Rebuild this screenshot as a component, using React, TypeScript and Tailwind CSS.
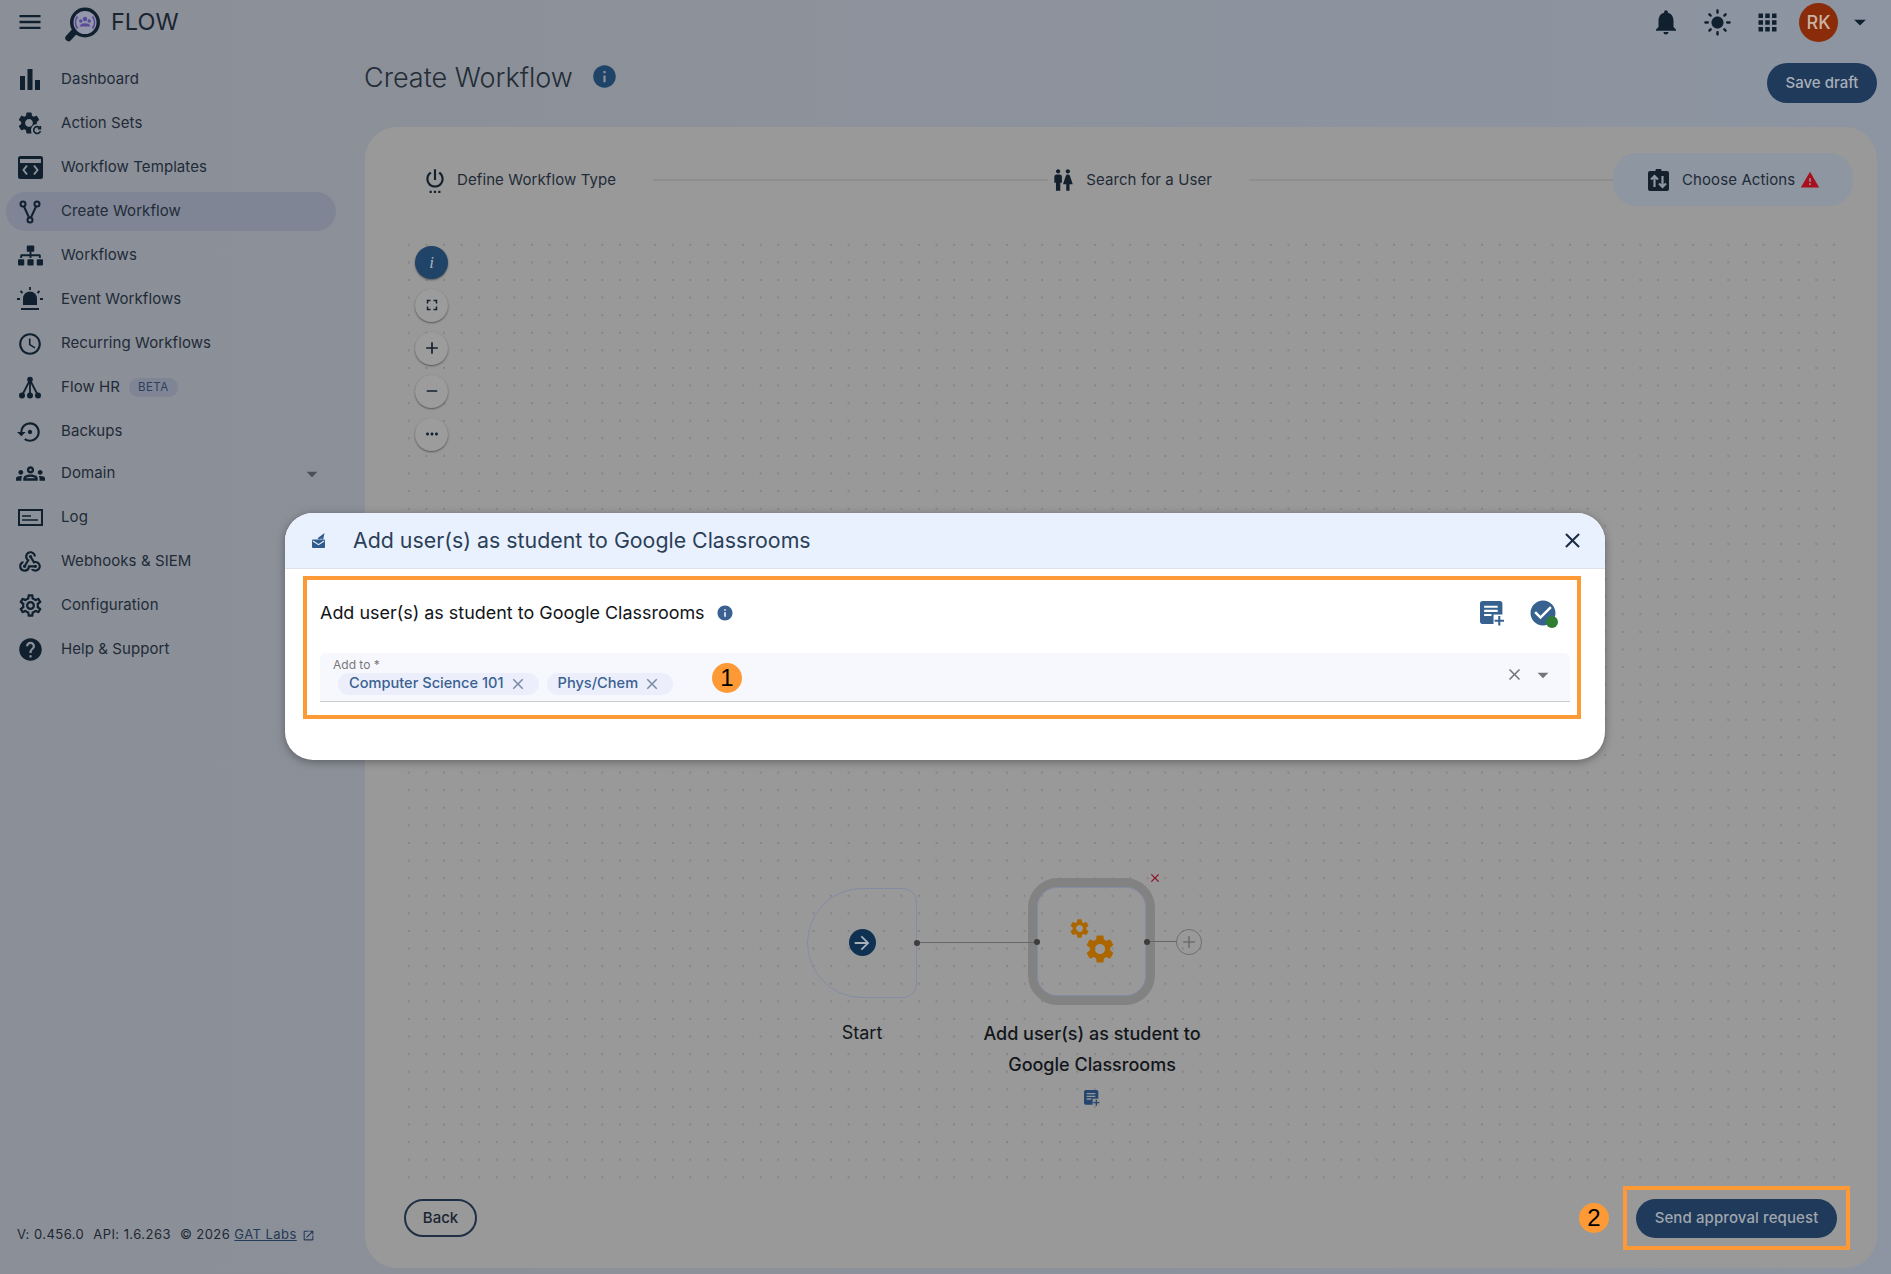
import React from "react";
import {
  MdAccessTime, MdAdd, MdApps, MdArrowDropDown, MdArrowForward, MdCheckCircle, MdClose, MdFullscreen,
  MdHelp, MdInfo, MdLightMode, MdMenu, MdMoreHoriz, MdNotifications, MdOpenInNew, MdOutlineGroups,
  MdOutlineSettings, MdOutlineSettingsBackupRestore, MdOutlineWebhook, MdRemove, MdSettings,
  MdSettingsPower, MdWarning, MdWc,
} from "react-icons/md";
import { FaSitemap } from "react-icons/fa";

const Bars = () => (
  <svg width="22" height="24" viewBox="0 0 22 24" fill="currentColor">
    <rect x="1" y="8" width="5" height="14" /><rect x="8.5" y="1" width="5" height="21" /><rect x="16" y="12" width="5" height="10" />
  </svg>
);
const ActionSets = () => (
  <span className="relative block w-6 h-6">
    <MdSettings size={26} className="absolute -left-[2px] -top-[2px]" />
    <span className="absolute -right-[1px] bottom-0 w-3 h-3 rounded-full bg-[#8b8f97] flex items-center justify-center">
      <svg width="10" height="10" viewBox="0 0 10 10" fill="none" stroke="currentColor" strokeWidth="1.6"><path d="M8 3.2A3.4 3.4 0 1 0 8.4 6" /><path d="M8.4 1v2.6H5.8" /></svg>
    </span>
  </span>
);
const Template = () => (
  <svg width="25" height="23" viewBox="0 0 25 23" fill="currentColor">
    <path fillRule="evenodd" d="M2.5 0h20A2.5 2.5 0 0 1 25 2.5v18a2.5 2.5 0 0 1-2.500 2.500h-20A2.500 2.500 0 0 1 0 20.500v-18A2.500 2.500 0 0 1 2.500 0zM2 5v16h21V5z" />
    <rect x="2" y="7" width="21" height="14" />
    <path d="M9 9.500 5.500 14 9 18.500M16 9.500 19.500 14 16 18.500" fill="none" stroke="#8b8f97" strokeWidth="2" />
    <rect x="2" y="3" width="21" height="2" fill="#8b8f97" />
  </svg>
);
const Fork = () => (
  <svg width="22" height="24" viewBox="0 0 22 24" fill="none" stroke="currentColor" strokeWidth="2">
    <circle cx="4" cy="4" r="2.500" /><circle cx="18" cy="4" r="2.500" /><circle cx="11" cy="20" r="2.500" />
    <path d="M5 6.500 10 17.500M17 6.500 12 17.500" />
  </svg>
);
const Siren = () => (
  <svg width="26" height="26" viewBox="0 0 26 26" fill="currentColor">
    <path d="M6 18v-6.500a7 7 0 0 1 14 0V18z" /><rect x="4" y="21" width="18" height="2" />
    <path d="M13 0v3M3.500 4 5.500 6M22.500 4 20.500 6M0 12h3M23 12h3" stroke="currentColor" strokeWidth="1.800" />
  </svg>
);
const FlowHr = () => (
  <svg width="24" height="24" viewBox="0 0 24 24" fill="currentColor">
    <circle cx="12" cy="3.500" r="2.800" /><circle cx="4" cy="19.500" r="3" /><circle cx="12" cy="19.500" r="3" /><circle cx="20" cy="19.500" r="3" />
    <path d="M12 4 4 19.500M12 4v15M12 4l8 15.500" stroke="currentColor" strokeWidth="1.800" fill="none" />
  </svg>
);
const LogIcon = () => (
  <svg width="25" height="17" viewBox="0 0 25 17" fill="none">
    <rect x="1" y="1" width="23" height="15" stroke="currentColor" strokeWidth="2" />
    <path d="M4 7h9M4 11h16" stroke="currentColor" strokeWidth="1.700" />
  </svg>
);
const NoteAdd = ({ size, bg }: { size: number; bg: string }) => (
  <svg width={size} height={size} viewBox="0 0 24 24" className="block">
    <path d="M2.500 0h16.500A2.500 2.500 0 0 1 21.500 2.500V22H2.500A2.500 2.500 0 0 1 0 19.500v-17A2.500 2.500 0 0 1 2.500 0z" fill="currentColor" />
    <path d="M4 5.500h13M4 9.500h13M4 13.500h7" stroke={bg} strokeWidth="2" />
    <rect x="13" y="13" width="11" height="11" fill={bg} />
    <path d="M18.500 14.500v9M14 19h9" stroke="currentColor" strokeWidth="2" />
  </svg>
);
const ClipSwap = () => (
  <svg width="21" height="22" viewBox="0 0 21 22" fill="currentColor">
    <path d="M2 2h5.500a3 3 0 0 1 6 0H19a2 2 0 0 1 2 2v16a2 2 0 0 1-2 2H2a2 2 0 0 1-2-2V4a2 2 0 0 1 2-2z" />
    <path d="M6.500 18V7M3 10.500 6.500 7 10 10.500M14.500 7v11M11 14.500 14.500 18 18 14.500" fill="none" stroke="#8e96a1" strokeWidth="2.200" />
  </svg>
);
const MailRocket = () => (
  <svg width="13" height="15" viewBox="0 0 14 16" fill="#2f5b8d">
    <rect x="0" y="7" width="14" height="9" rx="1" />
    <path d="M1 8.500 7 12.500l6-4" stroke="#eaf1fe" strokeWidth="1.200" fill="none" />
    <path d="M6 5.500 13.500 0 12 7 9.800 5.800 8 7z" />
  </svg>
);
const Logo = () => (
  <svg width="37" height="36" viewBox="0 0 37 36" className="block">
    <path d="M12 23 4.500 31" stroke="#10202f" strokeWidth="6.500" strokeLinecap="round" />
    <circle cx="21" cy="15.500" r="15" fill="#10202f" />
    <circle cx="21" cy="15.500" r="11.500" fill="#9496aa" />
    <path d="M13.500 9.500a10 10 0 0 0 0 12M28.500 9.500a10 10 0 0 1 0 12" stroke="#5a4a9c" strokeWidth="1.700" fill="none" />
    <circle cx="21" cy="12" r="2.200" fill="#5a4a9c" /><circle cx="16.800" cy="14" r="1.700" fill="#5a4a9c" /><circle cx="25.200" cy="14" r="1.700" fill="#5a4a9c" />
    <path d="M15.500 19.500c.5-4.500 10.500-4.500 11 0z" fill="#5a4a9c" />
  </svg>
);

const nav: { label: string; icon: React.ReactNode; active?: boolean; beta?: boolean; caret?: boolean; shift?: boolean }[] = [
  { label: "Dashboard", icon: <Bars /> },
  { label: "Action Sets", icon: <ActionSets /> },
  { label: "Workflow Templates", icon: <Template /> },
  { label: "Create Workflow", icon: <Fork />, active: true },
  { label: "Workflows", icon: <FaSitemap size={25} /> },
  { label: "Event Workflows", icon: <Siren /> },
  { label: "Recurring Workflows", icon: <MdAccessTime size={26} /> },
  { label: "Flow HR", icon: <FlowHr />, beta: true },
  { label: "Backups", icon: <MdOutlineSettingsBackupRestore size={26} /> },
  { label: "Domain", icon: <MdOutlineGroups size={29} />, caret: true, shift: true },
  { label: "Log", icon: <LogIcon /> },
  { label: "Webhooks & SIEM", icon: <MdOutlineWebhook size={26} /> },
  { label: "Configuration", icon: <MdOutlineSettings size={27} /> },
  { label: "Help & Support", icon: <MdHelp size={27} /> },
];

const ZoomBtn = ({ children, dark }: { children: React.ReactNode; dark?: boolean }) => (
  <div className={`w-[33px] h-[33px] rounded-full flex items-center justify-center shadow-[0_1px_2px_rgba(0,0,0,0.45)] ${dark ? "bg-[#1f4468] text-[#a9b2bb]" : "bg-[#9c9c9c] text-[#14202c]"}`}>
    {children}
  </div>
);
const Badge = ({ n }: { n: string }) => (
  <span className="w-[30px] h-[30px] rounded-full bg-[#fe9a35] flex items-center justify-center text-black text-[24px] leading-none font-['Liberation_Sans',sans-serif]">{n}</span>
);
const Chip = ({ label }: { label: string }) => (
  <span className="h-[22px] rounded-full bg-[#eceffb] pl-[11px] pr-[12px] flex items-center gap-[5px] text-[14.600px] font-medium text-[#3a6191]">
    {label}
    <MdClose size={18} className="text-[#7a8aa5]" />
  </span>
);
const Dot = ({ x, y }: { x: number; y: number }) => (
  <span className="absolute w-[6px] h-[6px] -ml-[3px] -mt-[3px] rounded-full bg-[#3c3c3c]" style={{ left: x, top: y }} />
);

export default function App() {
  return (
    <div className="relative w-[1891px] h-[1274px] overflow-hidden flex flex-col bg-[linear-gradient(90deg,#8b8f97_0%,#8c919a_40%,#8d95a2_100%)] text-[#212b37] font-['Inter',sans-serif] text-[15px]">
      <header className="h-[44px] shrink-0 flex items-center text-[#10202f]">
        <MdMenu size={28} className="ml-[16px]" />
        <span className="ml-[20px] mt-[6px]"><Logo /></span>
        <span className="ml-[10px] text-[23.500px] leading-none text-[#1a2531]">FLOW</span>
        <div className="ml-auto flex items-center">
          <MdNotifications size={30} />
          <MdLightMode size={29} className="ml-[22px]" />
          <MdApps size={27} className="ml-[22px]" />
          <span className="ml-[18px] w-[39px] h-[39px] rounded-full bg-[#8a2c09] text-[#c9b3a4] text-[18px] font-medium flex items-center justify-center">RK</span>
          <MdArrowDropDown size={28} className="ml-[8px] mr-[17px]" />
        </div>
      </header>

      <div className="flex flex-1 min-h-0">
        <aside className="w-[365px] shrink-0 flex flex-col pt-[13.500px]">
          <nav className="flex flex-col">
            {nav.map((n) => (
              <div key={n.label} className={`h-[44px] flex items-center ${n.shift ? "-mt-[2px]" : ""}`}>
                <div className={`ml-[6px] w-[330px] h-[39px] rounded-full pl-[6px] flex items-center ${n.active ? "bg-[#7f8595]" : ""}`}>
                  <span className="w-[36px] flex items-center justify-center text-[#10202f]">{n.icon}</span>
                  <span className="ml-[13px] tracking-[0.08px]">{n.label}</span>
                  {n.beta && <span className="ml-[9px] h-[19px] px-[9px] rounded-full bg-[#7f8595] text-[#2c3f5b] text-[11.500px] tracking-[0.4px] flex items-center">BETA</span>}
                  {n.caret && <MdArrowDropDown size={26} className="ml-auto mr-[11px] text-[#4b4f57]" />}
                </div>
              </div>
            ))}
          </nav>
          <div className="mt-auto mb-[29px] ml-[17px] h-[20px] flex items-center text-[13px] tracking-[0.45px] whitespace-pre text-[#1d2733]">
            <span>V: 0.456.0</span><span className="ml-[9px]">API: 1.6.263</span><span className="ml-[9px]">© 2026 </span>
            <span className="underline text-[#253a56]">GAT Labs</span>
            <MdOpenInNew size={13} className="ml-[5px] text-[#253a56]" />
          </div>
        </aside>

        <main className="flex-1 min-w-0 flex flex-col pr-[14px] pb-[6px]">
          <div className="h-[83px] shrink-0 flex items-start">
            <h1 className="mt-[18px] -ml-[1px] h-[32px] text-[27px] leading-[32px] font-light text-[#232c36]">Create Workflow</h1>
            <MdInfo size={27} className="mt-[19px] ml-[18px] text-[#1f4468]" />
            <button className="ml-auto mt-[19px] w-[110px] h-[40px] rounded-full bg-[#1f3a5b] text-[#a9afb7] text-[15px] font-medium">Save draft</button>
          </div>

          <section className="flex-1 min-h-0 rounded-[32px] bg-[#999999] flex flex-col pt-[26px]">
            <div className="h-[53px] shrink-0 flex items-center pl-[57px] pr-[24px]">
              <MdSettingsPower size={26} className="text-[#14202c]" />
              <span className="ml-[9px] mt-[2px] tracking-[0.1px]">Define Workflow Type</span>
              <span className="ml-[37px] w-[395px] h-[2px] bg-[#8e8e8e]" />
              <MdWc size={26} className="ml-[2px] text-[#14202c]" />
              <span className="ml-[10px] mt-[2px] tracking-[0.1px]">Search for a User</span>
              <span className="ml-[37px] flex-1 h-[2px] bg-[#8e8e8e]" />
              <div className="w-[240px] h-[53px] rounded-[24px] bg-[#8e96a1] flex items-center pl-[35px]">
                <span className="text-[#14202c]"><ClipSwap /></span>
                <span className="ml-[13px] mt-[2px] tracking-[0.1px]">Choose Actions</span>
                <MdWarning size={20} className="ml-[5px] text-[#a80f1f]" />
              </div>
            </div>

            <div className="relative mt-[29.600px] ml-[35px] mr-[31px] flex-1 min-h-0 bg-[radial-gradient(circle,#7f7f7f_0.6px,transparent_1px)] bg-size-[17.600px_17.600px]">
              <div className="absolute left-[15px] top-[10px] flex flex-col gap-[10px]">
                <ZoomBtn dark><span className="font-['Liberation_Serif',serif] italic text-[17px] leading-none">i</span></ZoomBtn>
                <ZoomBtn><MdFullscreen size={18} /></ZoomBtn>
                <ZoomBtn><MdAdd size={20} /></ZoomBtn>
                <ZoomBtn><MdRemove size={18} /></ZoomBtn>
                <ZoomBtn><MdMoreHoriz size={18} /></ZoomBtn>
              </div>

              {/* Start node */}
              <div className="absolute left-[407px] top-[652.400px] w-[110px] h-[110px] rounded-l-[55px] rounded-r-[14px] border border-[#828ca5] flex items-center justify-center">
                <span className="w-[27px] h-[27px] rounded-full bg-[#0f3152] text-[#a8b0ba] flex items-center justify-center"><MdArrowForward size={22} /></span>
              </div>
              <div className="absolute left-[407px] top-[784.400px] w-[110px] text-center text-[18px] leading-[26px] text-[#12161b]">Start</div>

              {/* Action node */}
              <div className="absolute left-[628px] top-[642.400px] w-[127px] h-[127px] rounded-[30px] border-[9px] border-[#828282]">
                <div className="w-full h-full rounded-[20px] border border-[#828ca5] relative">
                  <MdSettings size={23} className="absolute left-[30px] top-[29px] text-[#ab6600]" />
                  <MdSettings size={34} className="absolute left-[45px] top-[44px] text-[#ab6600]" />
                </div>
              </div>

              {/* Connectors */}
              <span className="absolute left-[517px] top-[706.400px] w-[120px] h-px bg-[#666666]" />
              <span className="absolute left-[747px] top-[705.400px] w-[30px] h-px bg-[#666666]" />
              <Dot x={517} y={707.4} />
              <Dot x={637} y={706.4} />
              <Dot x={747} y={706.4} />

              <MdClose size={14} className="absolute left-[748px] top-[635.400px] text-[#8e0b22]" />
              <span className="absolute left-[776px] top-[693.400px] w-[26px] h-[26px] rounded-full border border-[#6f6f6f] flex items-center justify-center text-[#6f6f6f]"><MdAdd size={20} /></span>
              <div className="absolute left-[572px] top-[782.400px] w-[240px] text-center text-[18px] leading-[31px] font-[450] text-[#12161b]">Add user(s) as student to<br />Google Classrooms</div>
              <span className="absolute left-[684px] top-[854.400px] text-[#24466e]"><NoteAdd size={16} bg="#959595" /></span>
            </div>

            <div className="h-[64px] shrink-0 mt-[5px] mb-[18px] pl-[39px] pr-[27px] flex items-center">
              <button className="w-[73px] h-[38px] rounded-full border-2 border-[#1f3045] text-[15px] font-medium text-[#1a2531]">Back</button>
              <span className="ml-auto"><Badge n="2" /></span>
              <div className="ml-[14px] w-[227px] h-[64px] border-4 border-[#fe9a35] flex items-center justify-center">
                <button className="w-[201px] h-[39px] rounded-full bg-[#1f3a5b] text-[#a0a6ae] text-[15px] font-medium tracking-[0.1px]">Send approval request</button>
              </div>
            </div>
          </section>
        </main>
      </div>

      {/* Dialog */}
      <div className="absolute left-[285px] top-[513px] w-[1320px] h-[247px] rounded-[28px] bg-white shadow-[0_2px_8px_rgba(0,0,0,0.35)] overflow-hidden flex flex-col">
        <div className="h-[56px] shrink-0 bg-[#eaf1fe] border-b border-[#dde1ea] flex items-center pl-[27px] pr-[20px]">
          <MailRocket />
          <span className="ml-[28px] text-[21.350px] text-[#2b3f58]">Add user(s) as student to Google Classrooms</span>
          <MdClose size={25} className="ml-auto text-[#1c2e45]" />
        </div>
        <div className="ml-[18px] mt-[7px] w-[1278px] h-[143px] border-4 border-[#fe9a35] flex flex-col pl-[13px] pr-[7px] pt-[20px] text-[#111418]">
          <div className="h-[26px] flex items-center">
            <span className="text-[17.950px]">Add user(s) as student to Google Classrooms</span>
            <MdInfo size={18} className="ml-[11px] text-[#3a6191]" />
            <span className="ml-auto text-[#37628f]"><NoteAdd size={25} bg="#ffffff" /></span>
            <span className="relative ml-[23px] mr-[12px] text-[#37628f]">
              <MdCheckCircle size={30} className="block" />
              <span className="absolute right-0 bottom-0 w-[12px] h-[12px] rounded-full bg-[#2e7d32]" />
            </span>
          </div>
          <div className="relative mt-[27px] h-[49px] rounded-t-[6px] bg-[#f7f8fe] border-b border-[#cccccc]">
            <span className="absolute left-[13px] top-[5px] text-[12px] leading-[14px] text-[#777777]">Add to *</span>
            <div className="absolute left-[18px] top-[20px] flex gap-[8px]">
              <Chip label="Computer Science 101" />
              <Chip label="Phys/Chem" />
            </div>
            <span className="absolute left-[392px] top-[10px]"><Badge n="1" /></span>
            <MdClose size={19} className="absolute right-[46px] top-[12px] text-[#757575]" />
            <MdArrowDropDown size={26} className="absolute right-[14px] top-[9px] text-[#757575]" />
          </div>
        </div>
      </div>
    </div>
  );
}
